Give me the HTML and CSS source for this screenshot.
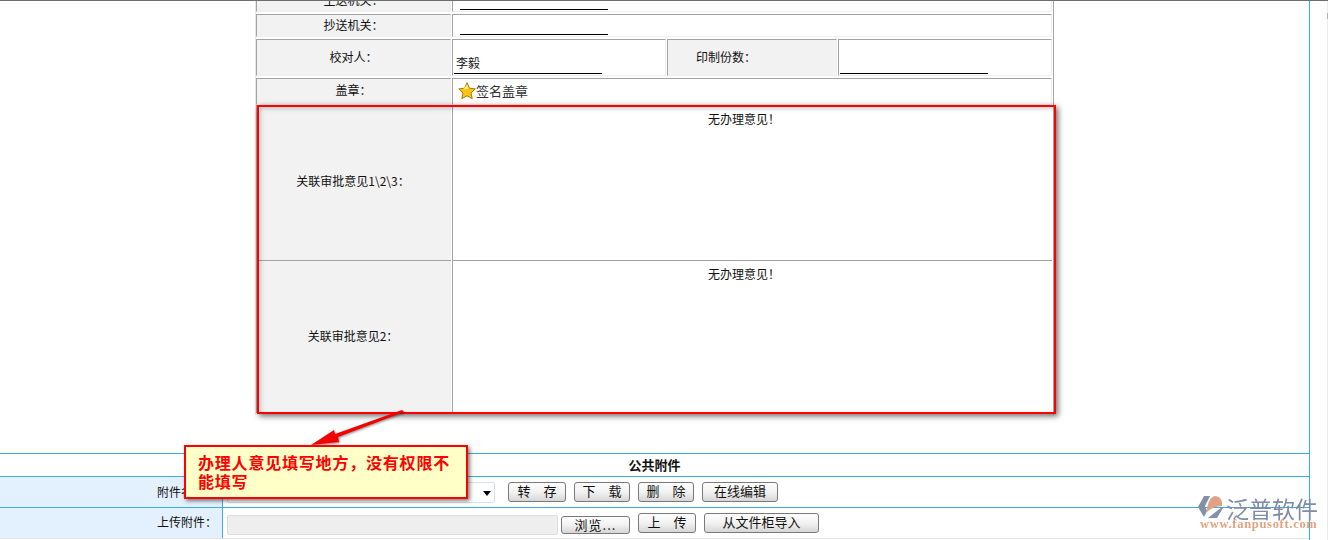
FILE: index.html
```html
<!DOCTYPE html>
<html lang="zh">
<head>
<meta charset="utf-8">
<title>公共附件</title>
<link rel="stylesheet" href="styles.css">
</head>
<body>
<div class="page">
  <div class="content">
    <div class="main">
      <div class="form">
        <div class="row row-cut">
          <div class="cell label">主送机关：</div>
          <div class="cell value"><span class="line line-a"></span></div>
        </div>
        <div class="row row-copy">
          <div class="cell label">抄送机关：</div>
          <div class="cell value"><span class="line line-a"></span></div>
        </div>
        <div class="row row-check">
          <div class="cell label">校对人：</div>
          <div class="cell value v-check"><span class="line line-b">李毅</span></div>
          <div class="cell label l-print">印制份数：</div>
          <div class="cell value v-print"><span class="line line-b"></span></div>
        </div>
        <div class="row row-seal">
          <div class="cell label">盖章：</div>
          <div class="cell value seal">
            <svg class="star" viewBox="0 0 18 18" width="18" height="18"><path d="M9 .8l2.5 5.4 5.8.7-4.3 4 1.2 5.8L9 13.8l-5.2 2.9L5 10.9l-4.3-4 5.8-.7z" fill="#fdc40f" stroke="#a97a08" stroke-width="1" stroke-linejoin="round"/><path d="M9 2.5l1.8 4.3L5 7.6z" fill="#ffe678"/></svg>
            <span>签名盖章</span>
          </div>
        </div>
        <div class="row row-note">
          <div class="cell label plain note-label note-label-a">关联审批意见1\2\3：</div>
          <div class="cell value plain note">无办理意见！</div>
        </div>
        <div class="row row-note row-note2">
          <div class="cell label plain note-label">关联审批意见2：</div>
          <div class="cell value plain note">无办理意见！</div>
        </div>
      </div>
    </div>
    <div class="attach">
      <div class="attach-title">公共附件</div>
      <div class="attach-row r-name">
        <div class="attach-label">附件名称：</div>
        <div class="attach-ctrl">
          <div class="select"><span class="caret"></span></div>
          <button class="btn b-save">转　存</button>
          <button class="btn b-down">下　载</button>
          <button class="btn b-del">删　除</button>
          <button class="btn b-edit">在线编辑</button>
        </div>
      </div>
      <div class="attach-row r-upload">
        <div class="attach-label">上传附件：</div>
        <div class="attach-ctrl">
          <div class="file"></div>
          <button class="btn b-browse">浏览...</button>
          <button class="btn b-up">上　传</button>
          <button class="btn b-cab">从文件柜导入</button>
        </div>
      </div>
    </div>
  </div>
  <div class="track"><div class="thumb"></div></div>
  <div class="mark"></div>
  <svg class="arrow" viewBox="0 0 110 50" width="110" height="50"><polygon points="1,41 24,26 25,30 92,6 94,8 28,33 29,38" fill="#f40000"/></svg>
  <div class="callout">办理人意见填写地方，没有权限不能填写</div>
  <div class="logo">
    <svg class="logo-icon" viewBox="0 0 26 24" width="26" height="24"><polygon points="0,12 6,1 12,1 7,11 9,16 6,22" fill="#8290a8"/><path d="M9 17 Q9 5 16 1 Q24 1 24 9 L24 11 Q15 11 9 17z" fill="#e2a184"/><polygon points="10,23 24,12 25,13 19,23" fill="#8290a8"/></svg>
    <div class="logo-text">
      <div class="logo-cn">泛普软件</div>
      <div class="logo-url">www.fanpusoft.com</div>
    </div>
  </div>
</div>
</body>
</html>
```
FILE: styles.css
```css
* { box-sizing: border-box; }
html, body { margin: 0; padding: 0; height: 540px; overflow: hidden; background: #fff; }
body { font-family: "Noto Sans CJK SC", "Liberation Sans", sans-serif; font-size: 12px; color: #111; }
.page { position: relative; display: flex; width: 1328px; height: 540px; overflow: hidden; border-top: 1px solid #6e6e6e; }
.content { width: 1310px; flex: none; border-right: 1px solid #3badde; }
.track { width: 1px; margin-left: auto; background: #ececec; }
.thumb { height: 6px; margin-top: 12px; background: #b4b4b4; }
.main { height: 452px; padding-left: 255px; overflow: hidden; }
.form { width: 799px; height: 427px; margin-top: -13px; border-left: 1px solid #e8e8e8; border-right: 1px solid #a6a6a6; padding-right: 1px; display: flex; flex-direction: column; gap: 2px; }
.row { display: flex; gap: 1px; }
.cell { border-top: 1px solid #a3a3a3; border-left: 1px solid #a3a3a3; border-right: 1px solid #efefef; border-bottom: 1px solid #efefef; display: flex; align-items: center; padding-bottom: 2px; }
.label { width: 195px; flex: none; background: #f2f2f2; justify-content: center; }
.value { flex: 1; background: #fff; position: relative; }
.row-cut { height: 24px; }
.row-copy { height: 23px; }
.row-check { height: 37px; }
.row-seal { height: 27px; margin-bottom: -2px; }
.row-seal .label { padding-bottom: 4px; }
.row-note { height: 155px; }
.row-note2 { height: 153px; margin-top: -2px; }
.plain { border-right: 0; border-bottom: 0; }
.note-label { padding-right: 2px; padding-bottom: 4px; }
.note-label-a { padding-bottom: 6px; }
.note { align-items: flex-start; justify-content: center; padding: 4px 17px 0 0; }
.line { display: block; position: absolute; width: 148px; border-bottom: 1px solid #000; }
.line-a { left: 7px; bottom: 1px; height: 2px; }
.line-b { left: 1px; bottom: 1px; height: 22px; line-height: 22px; padding-left: 2px; }
.v-check { flex: none; width: 214px; }
.l-print { width: 170px; padding-right: 52px; }
.v-print { flex: 1; }
.seal { padding-left: 5px; color: #333; font-size: 13px; }
.star { flex: none; display: block; }
.attach { height: 86px; border-top: 1px solid #3badde; border-bottom: 1px solid #e4e4e4; }
.attach-title { height: 22px; display: flex; align-items: center; justify-content: center; font-weight: 700; font-size: 13px; padding-bottom: 2px; }
.attach-row { display: flex; border-top: 1px solid #3badde; height: 31px; }
.attach-label { width: 223px; flex: none; background: #e3f0fd; border-right: 1px solid #3badde; text-align: right; padding-right: 5px; line-height: 28px; }
.r-name .attach-label { line-height: 30px; }
.attach-ctrl { flex: 1; display: flex; align-items: flex-start; padding-left: 4px; }
.select { width: 268px; height: 21px; margin-top: 5px; border: 1px solid #d8e2ea; border-radius: 2px; background: #fff; position: relative; }
.caret { position: absolute; right: 3px; top: 8px; border: 4px solid transparent; border-top: 5px solid #000; border-bottom: 0; }
.btn { height: 20px; padding: 0 0 3px; font: inherit; font-size: 13px; color: #111; border: 1px solid #7a7a7a; border-radius: 3px; background: linear-gradient(#fdfdfd 0, #f2f2f2 50%, #d6d6d6 100%); line-height: 15px; }
.r-name .btn { margin-top: 5px; }
.b-save { width: 58px; margin-left: 13px; }
.b-down { width: 56px; margin-left: 8px; }
.b-del { width: 56px; margin-left: 8px; }
.b-edit { width: 76px; margin-left: 8px; }
.file { width: 331px; height: 20px; margin-top: 7px; background: #eee; border: 1px solid #ddd; border-radius: 2px; }
.b-browse { width: 69px; height: 18px; margin: 8px 0 0 3px; letter-spacing: 1px; }
.b-up { width: 58px; margin: 5px 0 0 8px; }
.b-cab { width: 115px; margin: 5px 0 0 8px; }
.mark { position: absolute; left: 257px; top: 104px; width: 799px; height: 309px; border: 2px solid #f00; box-shadow: 2px 2px 6px rgba(0,0,0,.6), inset 2px 2px 4px rgba(0,0,0,.18); }
.arrow { position: absolute; left: 310px; top: 403px; filter: drop-shadow(1px 1px 1px rgba(0,0,0,.45)); }
.callout { position: absolute; left: 184px; top: 444px; width: 284px; height: 54px; padding: 6px 8px 0 12px; background: #ffffc8; border: 2px solid #f00; box-shadow: 2px 2px 4px rgba(0,0,0,.5); color: #f00; font-family: "Noto Sans CJK SC", serif; font-weight: 700; font-size: 16px; line-height: 19px; letter-spacing: .8px; }
.logo { position: absolute; left: 1198px; top: 494px; display: flex; align-items: flex-start; gap: 2px; filter: blur(.35px); }
.logo-icon { flex: none; }
.logo-text { position: relative; height: 36px; width: 96px; }
.logo-cn { font-size: 23px; line-height: 26px; color: #7f8ca3; white-space: nowrap; }
.logo-url { position: absolute; left: -26px; top: 22px; font-family: "Liberation Serif", serif; font-weight: 700; font-size: 12.5px; line-height: 14px; letter-spacing: .7px; color: #e3a17f; white-space: nowrap; }
```
